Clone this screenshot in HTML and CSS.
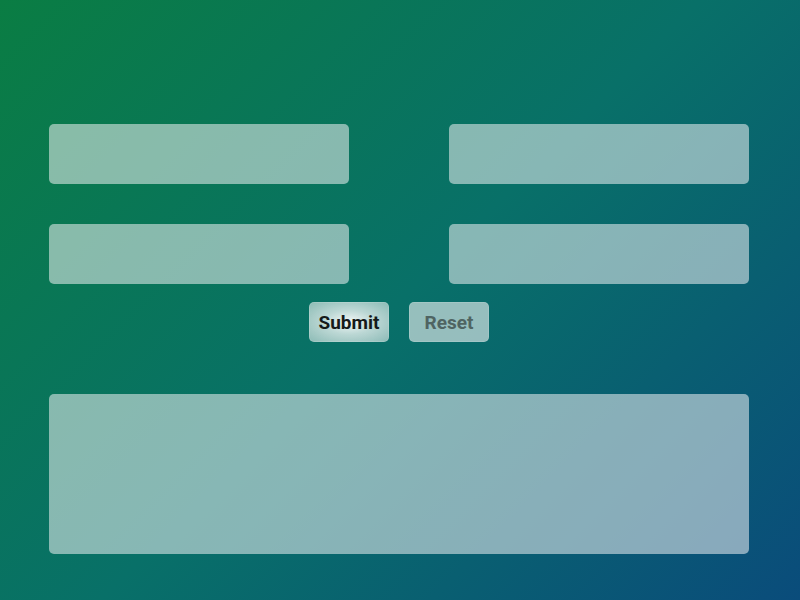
FILE: index.html
```html
<!DOCTYPE html>
<html>
<head>
<meta charset="utf-8">
<link rel="stylesheet" href="styles.css">
</head>
<body>
<form class="form">
  <div class="fields">
    <input class="field" type="text">
    <input class="field" type="text">
    <input class="field" type="text">
    <input class="field" type="text">
  </div>
  <div class="actions">
    <button type="button" class="btn btn-submit">Submit</button>
    <button type="button" class="btn btn-reset">Reset</button>
  </div>
  <textarea class="area"></textarea>
</form>
</body>
</html>
```

FILE: styles.css
```css
html, body {
  margin: 0;
  height: 100%;
}
body {
  background: linear-gradient(135deg, #0a7d43 0%, #087068 50%, #0a4c7b 100%);
  font-family: Roboto, "Liberation Sans", sans-serif;
  overflow: hidden;
}
.form {
  width: 700px;
  margin-left: 49px;
  padding-top: 124px;
  display: flex;
  flex-direction: column;
}
.fields {
  display: grid;
  grid-template-columns: 300px 300px;
  column-gap: 100px;
  row-gap: 40px;
}
.field, .area {
  display: block;
  box-sizing: border-box;
  border: none;
  border-radius: 5px;
  background: rgba(250, 248, 250, 0.53);
  outline: none;
  margin: 0;
}
.field {
  height: 60px;
  width: 300px;
}
.actions {
  display: flex;
  justify-content: center;
  gap: 20px;
  margin-top: 18px;
}
.btn {
  box-sizing: border-box;
  width: 80px;
  height: 40px;
  border: 1px solid rgba(255, 255, 255, 0.12);
  border-radius: 5px;
  font-family: Roboto, "Liberation Sans", sans-serif;
  font-weight: 700;
  font-size: 19px;
  padding: 0;
}
.btn-submit {
  background: radial-gradient(ellipse at center, rgba(255,255,255,0.95) 0%, rgba(240,245,244,0.78) 45%, rgba(225,235,233,0.62) 100%);
  color: #161a1a;
}
.btn-reset {
  background: rgba(245, 245, 245, 0.6);
  color: #4f6462;
}
.area {
  margin-top: 52px;
  width: 700px;
  height: 160px;
  resize: none;
}
```
